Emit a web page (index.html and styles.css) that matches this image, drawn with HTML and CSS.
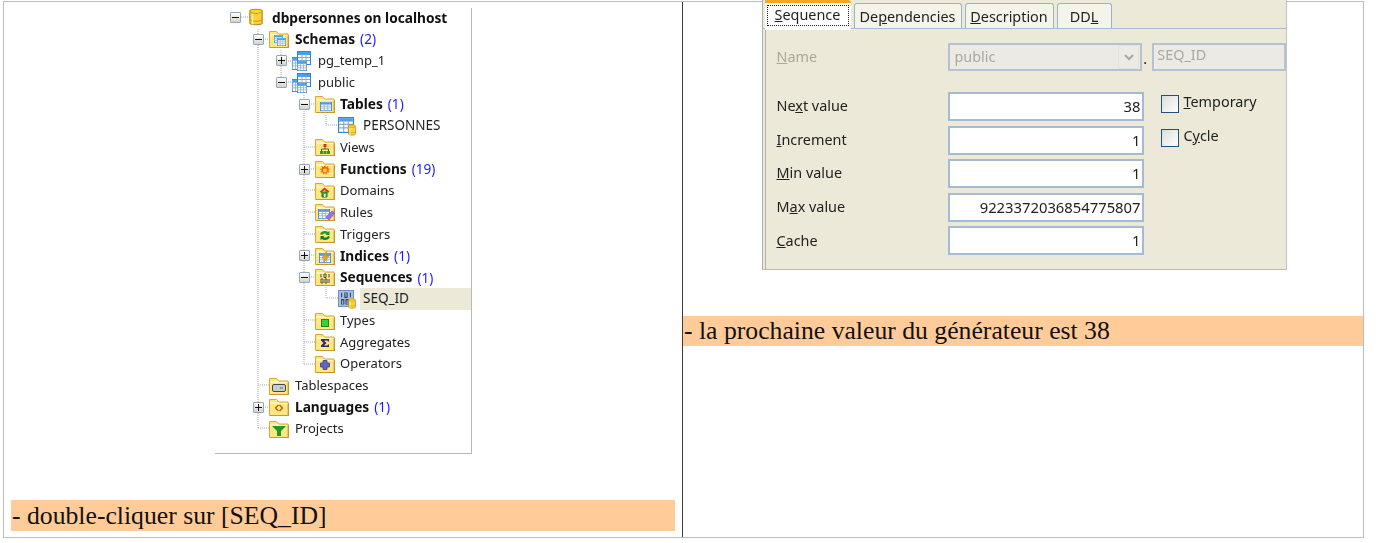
FILE: index.html
```html
<!DOCTYPE html>
<html lang="fr">
<head>
<meta charset="utf-8">
<title>Séquence SEQ_ID</title>
<link rel="stylesheet" href="styles.css">
</head>
<body>
<svg class="defs" width="0" height="0" aria-hidden="true">
  <symbol id="folder" viewBox="0 0 20 20">
    <path d="M.5 2.500h7l2 2.500h9.500v13.500H.5z" fill="#ffe784" stroke="#d6a838"/>
    <path d="M1.500 5.500h8M1.500 6.500h17" stroke="#fff6c4"/>
    <path d="M1 18.500h19M19.500 6v13" stroke="#c9982c"/>
  </symbol>
  <symbol id="table" viewBox="0 0 14 14" preserveAspectRatio="none">
    <rect x=".5" y=".5" width="13" height="13" fill="#fff" stroke="#2f86dc"/>
    <path d="M1 1h12v3H1z" fill="#4f9fe8"/>
    <path d="M1 6.500h12M1 9.500h12M5 4v9M9 4v9" stroke="#8fa8c4"/>
  </symbol>
  <symbol id="cyl" viewBox="0 0 8 12" preserveAspectRatio="none">
    <path d="M.5 2C.5.500 7.500.500 7.500 2v8c0 1.500-7 1.500-7 0z" fill="#ffd23c" stroke="#b98a18" stroke-width=".7"/>
    <path d="M.7 2.800c2 1 4.600 1 6.600 0M.7 8c2 1 4.600 1 6.600 0" stroke="#c89a20" stroke-width=".6" fill="none"/>
    <path d="M2 4v7" stroke="#fff2a8" stroke-width=".8"/>
  </symbol>
  <symbol id="bits" viewBox="0 0 10 10" preserveAspectRatio="none">
    <path d="M1 0v4M4 0h2v4H4zM9 0v4M1 6h2v4H1zM5 6h2v4H5zM9 6v4" fill="none" stroke="#33445c"/>
  </symbol>
</svg>

<main class="sheet">
  <section class="cell cell-left">
    <div class="tree">
      <svg class="links" viewBox="0 0 257 446" width="257" height="446" aria-hidden="true">
        <path d="M26 9h9M43 21V420M66 42V74M89 87V356M111 107v10h13M111 279v11h13M48 31h6M71 53h6M71 74h6M94 96h6M89 139h11M94 161h6M89 182h11M89 204h11M89 226h11M94 247h6M94 269h6M89 312h11M89 334h11M89 356h11M43 377h11M48 399h6M43 420h11" fill="none" stroke="#a8a8a8" stroke-dasharray="1 1"/>
      </svg>
      <div class="rows">
        <div class="row l0"><span class="exp minus"></span>
          <svg class="ico" viewBox="0 0 20 20"><use href="#cyl" x="3" y="0" width="14" height="18"/></svg>
          <b>dbpersonnes on localhost</b></div>
        <div class="row l1"><span class="exp minus"></span>
          <svg class="ico" viewBox="0 0 20 20"><use href="#folder"/><use href="#table" x="5" y="6" width="9" height="8"/><use href="#table" x="8" y="9" width="9" height="8"/></svg>
          <b>Schemas</b><i>(2)</i></div>
        <div class="row l2"><span class="exp plus"></span>
          <svg class="ico" viewBox="0 0 20 20"><use href="#table" x="0" y="6" width="10" height="13"/><use href="#table" x="5" y="0" width="14" height="14"/><use href="#table" x="5" y="10" width="10" height="10"/></svg>
          <span>pg_temp_1</span></div>
        <div class="row l2"><span class="exp minus"></span>
          <svg class="ico" viewBox="0 0 20 20"><use href="#table" x="0" y="6" width="10" height="13"/><use href="#table" x="5" y="0" width="14" height="14"/><use href="#table" x="5" y="10" width="10" height="10"/></svg>
          <span>public</span></div>
        <div class="row l3"><span class="exp minus"></span>
          <svg class="ico" viewBox="0 0 20 20"><use href="#folder"/><use href="#table" x="5" y="8" width="12" height="9"/></svg>
          <b>Tables</b><i>(1)</i></div>
        <div class="row l4"><span class="exp none"></span>
          <svg class="ico" viewBox="0 0 20 20"><use href="#table" x="0" y="1" width="16" height="16"/><use href="#cyl" x="10" y="8" width="8" height="12"/></svg>
          <span>PERSONNES</span></div>
        <div class="row l3"><span class="exp none"></span>
          <svg class="ico" viewBox="0 0 20 20"><use href="#folder"/><path d="M8.500 7h3v3h-3z" fill="#e3262a"/><path d="M10 10v2M6.500 14v-2h7v2" fill="none" stroke="#2c7a1c"/><path d="M5 14h3v3H5zM8.500 14h3v3h-3zM12 14h3v3h-3z" fill="#2f9a22"/></svg>
          <span>Views</span></div>
        <div class="row l3"><span class="exp plus"></span>
          <svg class="ico" viewBox="0 0 20 20"><use href="#folder"/><path d="M10 6l1.300 2 2.200-1-.5 2.300 2.300.7-2 1.500 1.500 2-2.500-.2-.6 2.400-1.700-1.700-1.700 1.700-.6-2.400-2.500.2 1.500-2-2-1.500 2.300-.7L6.500 7l2.200 1z" fill="#f06a14"/><circle cx="10" cy="11.500" r="2" fill="#ffd23c"/></svg>
          <b>Functions</b><i>(19)</i></div>
        <div class="row l3"><span class="exp none"></span>
          <svg class="ico" viewBox="0 0 20 20"><use href="#folder"/><path d="M9.500 6.500l5 4-1.500 1.500-3.500-3-3.500 3L5 10.500z" fill="#d83a28"/><path d="M7 11h5v5H7z" fill="#34b83c" stroke="#1f7a24"/><path d="M9 13h1.500v3H9z" fill="#fff"/></svg>
          <span>Domains</span></div>
        <div class="row l3"><span class="exp none"></span>
          <svg class="ico" viewBox="0 0 20 20"><use href="#folder"/><use href="#table" x="3" y="7" width="12" height="10"/><path d="M11 15l6-6 3 2-6 7z" fill="#a070e0" stroke="#7a50c0" stroke-width=".6"/></svg>
          <span>Rules</span></div>
        <div class="row l3"><span class="exp none"></span>
          <svg class="ico" viewBox="0 0 20 20"><use href="#folder"/><path d="M5 10c1-3 6-4 8-2l1.500-1v4h-4l1.200-1c-1.500-1-3.700-.8-4.700 1z" fill="#1f9a2c"/><path d="M15 13c-1 3-6 4-8 2l-1.500 1v-4h4l-1.200 1c1.500 1 3.700.8 4.700-1z" fill="#1a7a24"/></svg>
          <span>Triggers</span></div>
        <div class="row l3"><span class="exp plus"></span>
          <svg class="ico" viewBox="0 0 20 20"><use href="#folder"/><use href="#table" x="4" y="7" width="12" height="10"/><path d="M11.500 5.500L7 12h3l-1.500 5 5.500-7h-3z" fill="#f2a020" stroke="#c87a10" stroke-width=".5"/></svg>
          <b>Indices</b><i>(1)</i></div>
        <div class="row l3"><span class="exp minus"></span>
          <svg class="ico" viewBox="0 0 20 20"><use href="#folder"/><path d="M6 7v3.500M9 7h2v3.500H9zM14 7v3.500M6 12h2v4H6zM10 12h2v4h-2zM14 12v4" fill="none" stroke="#4c4c4c"/></svg>
          <b>Sequences</b><i>(1)</i></div>
        <div class="row l4 selected"><span class="exp none"></span>
          <svg class="ico" viewBox="0 0 20 20"><rect x=".5" y="1.500" width="15" height="16" fill="#a4c0e6" stroke="#6f90c0"/><use href="#bits" x="2.500" y="3.500" width="11" height="12"/><use href="#cyl" x="10" y="9" width="8" height="11"/></svg>
          <span>SEQ_ID</span></div>
        <div class="row l3"><span class="exp none"></span>
          <svg class="ico" viewBox="0 0 20 20"><use href="#folder"/><rect x="6.500" y="8.500" width="7" height="7" fill="#34d13c" stroke="#1f8a24"/></svg>
          <span>Types</span></div>
        <div class="row l3"><span class="exp none"></span>
          <svg class="ico" viewBox="0 0 20 20"><use href="#folder"/><path d="M6 7h8v2.500h-1.200L12.500 8.500H9l2.500 2.500L9 13.500h3.500l.3-1H14V15H6v-1.500L8.500 11 6 8.500z" fill="#2e2a6e"/></svg>
          <span>Aggregates</span></div>
        <div class="row l3"><span class="exp none"></span>
          <svg class="ico" viewBox="0 0 20 20"><use href="#folder"/><path d="M8 6.500h4V9h2.500v4H12v2.500H8V13H5.500V9H8z" fill="#5c68c4" stroke="#2e3478" stroke-width=".7"/></svg>
          <span>Operators</span></div>
        <div class="row l1"><span class="exp none"></span>
          <svg class="ico" viewBox="0 0 20 20"><use href="#folder"/><rect x="3.500" y="8.500" width="13" height="7" rx="1.500" fill="#c8ccd0" stroke="#45484c"/><path d="M11 12h3" stroke="#1f9a2c"/></svg>
          <span>Tablespaces</span></div>
        <div class="row l1"><span class="exp plus"></span>
          <svg class="ico" viewBox="0 0 20 20"><use href="#folder"/><path d="M9.500 8L6.500 11l3 3M10.500 14l3-3-3-3" fill="none" stroke="#a86a10" stroke-width="1.400"/></svg>
          <b>Languages</b><i>(1)</i></div>
        <div class="row l1"><span class="exp none"></span>
          <svg class="ico" viewBox="0 0 20 20"><use href="#folder"/><path d="M3 7h14l-5 5v5H8v-5z" fill="#1f9a1c"/></svg>
          <span>Projects</span></div>
      </div>
    </div>
    <p class="note note-left">- double-cliquer sur [SEQ_ID]</p>
  </section>

  <section class="cell cell-right">
    <div class="panel">
      <div class="tabs">
        <div class="tab active"><span class="focus"><u>S</u>equence</span></div>
        <div class="tab t-dep">De<u>p</u>endencies</div>
        <div class="tab t-desc"><u>D</u>escription</div>
        <div class="tab t-ddl">DD<u>L</u></div>
      </div>
      <div class="body">
        <div class="name-row">
          <label class="lbl disabled"><u>N</u>ame</label>
          <div class="field select off"><span>public</span><span class="arrow"><svg viewBox="0 0 12 8" width="12" height="8"><path d="M2 2l4 4 4-4" fill="none" stroke="#a9a99e" stroke-width="2"/></svg></span></div>
          <span class="dot">.</span>
          <div class="field off seqname">SEQ_ID</div>
        </div>
        <div class="split">
          <div class="form">
            <div class="frow"><label class="lbl">Ne<u>x</u>t value</label><div class="field num">38</div></div>
            <div class="frow"><label class="lbl"><u>I</u>ncrement</label><div class="field num">1</div></div>
            <div class="frow"><label class="lbl"><u>M</u>in value</label><div class="field num">1</div></div>
            <div class="frow"><label class="lbl">M<u>a</u>x value</label><div class="field num">9223372036854775807</div></div>
            <div class="frow"><label class="lbl"><u>C</u>ache</label><div class="field num">1</div></div>
          </div>
          <div class="checks">
            <div class="check"><span class="box"></span><span class="check-label"><u>T</u>emporary</span></div>
            <div class="check"><span class="box"></span><span class="check-label">C<u>y</u>cle</span></div>
          </div>
        </div>
      </div>
    </div>
    <p class="note note-right">- la prochaine valeur du générateur est 38</p>
  </section>
</main>
</body>
</html>
```

FILE: styles.css
```css
* { box-sizing: border-box; }

html, body {
  margin: 0;
  padding: 0;
  background: #fff;
  overflow: hidden;
}

.defs { position: absolute; }

.sheet {
  display: grid;
  grid-template-columns: 679px 680px;
  width: 1361px;
  height: 537px;
  margin: 1px 0 0 3px;
  border: 1px solid #bdbdbd;
}

.cell { min-width: 0; display: flex; flex-direction: column; align-items: center; }
.cell-left { border-right: 1px solid #3c3c3c; padding: 6px 7px 0 7px; }

/* tree screenshot */
.tree {
  position: relative;
  width: 257px;
  height: 446px;
  margin-left: 1px;
  border-right: 1px solid #b8b8b8;
  border-bottom: 1px solid #b8b8b8;
  font: 13px/1 "Noto Sans", sans-serif;
  color: #222;
  filter: blur(.4px);
}
.links { position: absolute; left: 0; top: 0; }
.rows { position: relative; margin-top: -1.2px; }
.row {
  display: flex;
  align-items: center;
  height: 21.65px;
  white-space: nowrap;
}
.row b { font-size: 13.7px; font-weight: 700; color: #111; }
.row i { font-style: normal; font-size: 13.6px; color: #1a1aff; margin-left: 5px; }
.l0 { padding-left: 15px; }
.l1 { padding-left: 38px; }
.l2 { padding-left: 61px; }
.l3 { padding-left: 84px; }
.l4 { padding-left: 107px; }
.l3 .ico, .l4 .ico { margin-right: 5px; }
.l4 span:last-child { font-size: 13.5px; }
.selected span:last-child {
  align-self: stretch;
  display: flex;
  align-items: center;
  flex: 1;
  margin-left: -3px;
  padding-left: 3px;
  background: #ece9d8;
}
.exp {
  position: relative;
  flex: none;
  width: 11px;
  height: 11px;
  margin-right: 5px;
  border: 1px solid #8ea8c4;
  border-radius: 1px;
  background: linear-gradient(#fff, #d6d2c4);
}
.exp.none { border: 0; background: none; }
.exp.minus::before, .exp.plus::before {
  content: "";
  position: absolute;
  left: 1px; right: 1px; top: 4px;
  height: 1px;
  background: #111;
}
.exp.plus::after {
  content: "";
  position: absolute;
  top: 1px; bottom: 1px; left: 4px;
  width: 1px;
  background: #111;
}
.ico { flex: none; width: 20px; height: 20px; margin-right: 6px; }

/* notes */
.note {
  margin: 0;
  width: 100%;
  height: 31px;
  padding-left: 1px;
  background: #ffcc99;
  font: 25.7px/31px "Liberation Serif", serif;
  color: #111;
  white-space: nowrap;
}
.note-left { margin-top: 46px; }
.note-right { margin-top: 46px; height: 30px; line-height: 30px; }

/* sequence dialog screenshot */
.panel {
  width: 525px;
  height: 270px;
  margin: -2px 0 0 2px;
  flex: none;
  background: #ece9d8;
  border-left: 1px solid #b0b0a8;
  border-right: 1px solid #c4c4bc;
  border-bottom: 1px solid #b8b8b0;
  box-shadow: inset 2px 0 0 #ece9d8, inset 3px 0 0 #b4b4aa;
  font: 14.4px/1 "Noto Sans", sans-serif;
  color: #222;
  filter: blur(.4px);
}
.tabs {
  display: flex;
  align-items: flex-end;
  height: 29px;
  padding-left: 2px;
  border-bottom: 1px solid #a9bccf;
  gap: 3px;
}
.tab {
  display: flex;
  align-items: center;
  justify-content: center;
  height: 25px;
  padding-top: 2px;
  background: #f5f4ea;
  border: 1px solid #9fb3c6;
  border-bottom: 0;
  border-radius: 3px 3px 0 0;
}
.tab.active {
  width: 86px;
  height: 30px;
  margin-bottom: -2px;
  padding: 2px 2px 4px;
  background: #fff;
  border: 0;
  border-top: 3px solid #f5a623;
}
.focus {
  display: flex;
  align-items: center;
  justify-content: center;
  width: 100%;
  height: 100%;
  border: 1px dotted #222;
}
.t-dep { width: 108px; }
.t-desc { width: 89px; }
.t-ddl { width: 55px; }

.body { padding: 14px 0 0 14px; }
.lbl { flex: none; width: 171px; }
.disabled { color: #aca899; }
.name-row { display: flex; align-items: center; height: 28px; }
.field {
  display: flex;
  align-items: center;
  height: 29px;
  width: 196px;
  background: #fff;
  border: 2px solid #a3bcd3;
  padding: 0 1px;
}
.num { justify-content: flex-end; font-size: 14.8px; }
.off { background: #ebebe4; color: #a9a99e; border-color: #b4c3cf; }
.select { justify-content: space-between; padding: 0 1px 0 5px; height: 28px; }
.arrow {
  display: flex;
  align-items: center;
  justify-content: center;
  width: 21px;
  height: 24px;
  border: 1px solid #e2e2da;
  border-radius: 2px;
  background: #ececE4;
}
.dot { width: 9px; padding-left: 1px; align-self: flex-end; line-height: 24px; }
.seqname { width: 134px; height: 28px; padding: 0 0 3px 3px; margin-left: 1px; }

.split { display: flex; margin-top: 21px; }
.form { display: flex; flex-direction: column; gap: 4.6px; }
.frow { display: flex; align-items: center; }
.checks { display: flex; flex-direction: column; gap: 15px; margin: 2px 0 0 17px; }
.check { display: flex; align-items: center; gap: 5px; height: 19px; }
.check-label { padding-bottom: 3px; }
.box {
  flex: none;
  width: 18px;
  height: 18px;
  border: 1px solid #1c5180;
  background: linear-gradient(135deg, #dcdcd7, #fff);
}
```
